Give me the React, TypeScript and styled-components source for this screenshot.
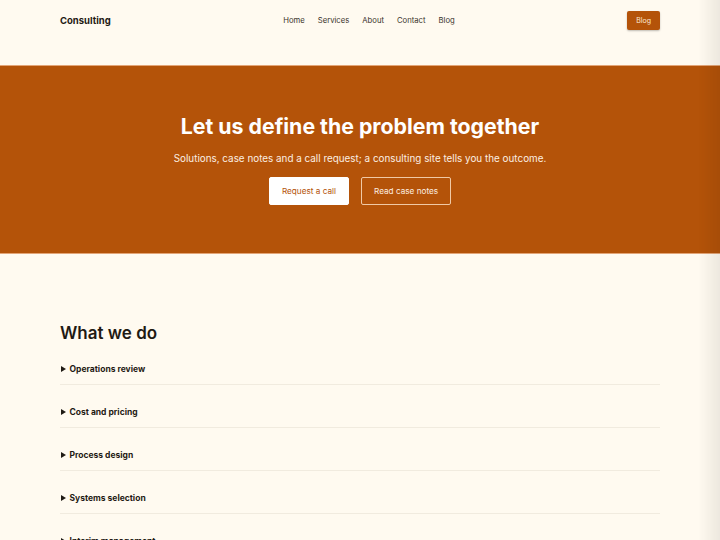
import React from 'react';
import styled, { createGlobalStyle } from 'styled-components';

const GlobalStyle = createGlobalStyle`
  html, body {
    margin: 0;
    padding: 0;
    background: #fffaf0;
    font-family: Inter, "Noto Sans", sans-serif;
    color: #1f1a14;
  }
  * { box-sizing: border-box; }
`;

const Page = styled.div`
  min-height: 540px;
  overflow: hidden;
`;

const EdgeShade = styled.div`
  position: fixed;
  top: 0;
  right: 0;
  width: 22px;
  height: 100%;
  pointer-events: none;
  background: linear-gradient(to right, rgba(0, 0, 0, 0), rgba(0, 0, 0, 0.07));
`;

const Header = styled.header`
  display: flex;
  align-items: center;
  padding: 11px 60px;
  height: 41px;
`;

const Logo = styled.div`
  font-size: 9.5px;
  font-weight: 700;
`;

const Nav = styled.nav`
  flex: 1;
  display: flex;
  justify-content: center;
  gap: 13px;
  font-size: 7.7px;
  color: #3a332b;
`;

const NavLink = styled.a`
  color: inherit;
  text-decoration: none;
`;

const SmallButton = styled.a`
  display: inline-flex;
  align-items: center;
  justify-content: center;
  height: 19px;
  padding: 0 9px;
  background: #b45309;
  color: #fde9d4;
  font-size: 7px;
  border-radius: 2px;
  box-shadow: 0 1px 2px rgba(0, 0, 0, 0.25);
`;

const Hero = styled.section`
  margin-top: 24px;
  height: 189px;
  background: #b45309;
  border-top: 1px solid #e3a577;
  border-bottom: 1px solid #e3a577;
  display: flex;
  flex-direction: column;
  align-items: center;
  padding-top: 47px;
  color: #fff;
`;

const HeroTitle = styled.h1`
  margin: 0;
  font-size: 21.3px;
  font-weight: 700;
  line-height: 26px;
`;

const HeroText = styled.p`
  margin: 12px 0 0;
  font-size: 9.9px;
  line-height: 14px;
  color: #fbeee2;
`;

const Actions = styled.div`
  display: flex;
  gap: 12px;
  margin-top: 12px;
`;

const ActionButton = styled.a<{ $outline?: boolean }>`
  display: inline-flex;
  align-items: center;
  justify-content: center;
  height: 28px;
  padding: 0 12px;
  font-size: 8.2px;
  border-radius: 2px;
  background: ${p => (p.$outline ? 'transparent' : '#ffffff')};
  color: ${p => (p.$outline ? '#fdeee0' : '#b45309')};
  border: 1px solid ${p => (p.$outline ? '#f0c9a6' : '#ffffff')};
`;

const Section = styled.section`
  padding: 70px 60px 0;
`;

const SectionTitle = styled.h2`
  margin: 0;
  font-size: 17px;
  font-weight: 600;
  line-height: 18px;
`;

const Item = styled.details`
  padding: 21px 0 9px;
  border-bottom: 1px solid #f1ebdf;
`;

const Summary = styled.summary`
  list-style: none;
  display: flex;
  align-items: center;
  gap: 3.5px;
  font-size: 8.5px;
  font-weight: 700;
  line-height: 12px;
  cursor: pointer;
  &::-webkit-details-marker { display: none; }
  &::before {
    content: '';
    margin-left: 1px;
    border-left: 5px solid #1f1a14;
    border-top: 3px solid transparent;
    border-bottom: 3px solid transparent;
  }
`;

const services = [
  'Operations review',
  'Cost and pricing',
  'Process design',
  'Systems selection',
  'Interim management',
];

export default function App() {
  return (
    <Page>
      <GlobalStyle />
      <Header>
        <Logo>Consulting</Logo>
        <Nav>
          {['Home', 'Services', 'About', 'Contact', 'Blog'].map(l => (
            <NavLink key={l}>{l}</NavLink>
          ))}
        </Nav>
        <SmallButton>Blog</SmallButton>
      </Header>
      <Hero>
        <HeroTitle>Let us define the problem together</HeroTitle>
        <HeroText>Solutions, case notes and a call request; a consulting site tells you the outcome.</HeroText>
        <Actions>
          <ActionButton>Request a call</ActionButton>
          <ActionButton $outline>Read case notes</ActionButton>
        </Actions>
      </Hero>
      <Section>
        <SectionTitle>What we do</SectionTitle>
        {services.map(s => (
          <Item key={s}>
            <Summary>{s}</Summary>
          </Item>
        ))}
      </Section>
      <EdgeShade />
    </Page>
  );
}
